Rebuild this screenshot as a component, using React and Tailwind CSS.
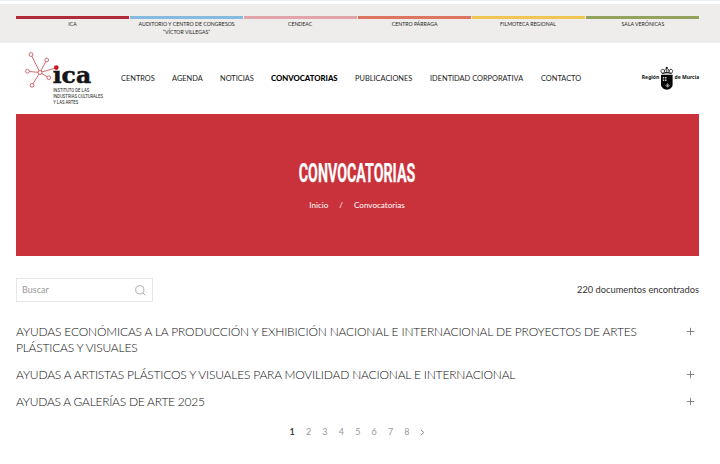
const CENTRES = [
  { lines: ['ICA'], bar: 'bg-[#b02c38]' },
  { lines: ['AUDITORIO Y CENTRO DE CONGRESOS', '“VÍCTOR VILLEGAS”'], bar: 'bg-[#86bade]' },
  { lines: ['CENDEAC'], bar: 'bg-[#e2a4ab]' },
  { lines: ['CENTRO PÁRRAGA'], bar: 'bg-[#dc7562]' },
  { lines: ['FILMOTECA REGIONAL'], bar: 'bg-[#f0c653]' },
  { lines: ['SALA VERÓNICAS'], bar: 'bg-[#93a35e]' },
];

const NAV = [
  { label: 'CENTROS', w: 'w-[34px]' },
  { label: 'AGENDA', w: 'w-[31px]' },
  { label: 'NOTICIAS', w: 'w-[34px]' },
  { label: 'CONVOCATORIAS', w: 'w-[67px]', active: true },
  { label: 'PUBLICACIONES', w: 'w-[57.5px]' },
  { label: 'IDENTIDAD CORPORATIVA', w: 'w-[93.5px]' },
  { label: 'CONTACTO', w: 'w-[40px]' },
];

const NODES = [[31, 54.5], [46.7, 60], [27.5, 71.3], [32, 85.3], [48.8, 77.7]];

function IcaLogo() {
  return (
    <svg className="h-[60px] w-[90px] shrink-0 overflow-visible" viewBox="20 48 90 60" role="img" aria-label="ICA">
      <g fill="#fff" stroke="#c9474f" strokeWidth="0.8">
        {NODES.map(([x, y]) => (
          <line key={x} x1="40" y1="72.5" x2={x} y2={y} />
        ))}
        <line x1="40" y1="72.5" x2="56" y2="68" />
        {NODES.map(([x, y]) => (
          <circle key={x} cx={x} cy={y} r="1.9" />
        ))}
        <circle cx="40" cy="72.5" r="2" />
      </g>
      <text x="52.7" y="83.2" fontFamily="'DejaVu Serif', serif" fontWeight="bold" fontSize="21.5" fill="#161616" stroke="#161616" strokeWidth="0.5" textLength="38.4" lengthAdjust="spacingAndGlyphs">ıca</text>
      <circle cx="56.3" cy="67.6" r="2.3" fill="#c4141d" />
      <g fontFamily="Roboto, sans-serif" fontSize="5.8" fill="#222">
        <text x="53.2" y="92" textLength="36" lengthAdjust="spacingAndGlyphs">INSTITUTO DE LAS</text>
        <text x="53.2" y="98" textLength="49.8" lengthAdjust="spacingAndGlyphs">INDUSTRIAS CULTURALES</text>
        <text x="53.2" y="104" textLength="25" lengthAdjust="spacingAndGlyphs">Y LAS ARTES</text>
      </g>
    </svg>
  );
}

function MurciaLogo() {
  return (
    <svg className="h-[30px] w-[60px] shrink-0 overflow-visible" viewBox="640 63 60 30" role="img" aria-label="Región de Murcia">
      <g fontFamily="'Noto Sans', sans-serif" fontWeight="bold" fontSize="5.4" fill="#111">
        <text x="641.8" y="79" textLength="17.5" lengthAdjust="spacingAndGlyphs">Región</text>
        <text x="674.5" y="79" textLength="24.7" lengthAdjust="spacingAndGlyphs">de Murcia</text>
      </g>
      <path d="M661 74.8h11.6v9.4c0 3.2-2.6 5.2-5.8 5.6-3.2-.4-5.8-2.4-5.8-5.6z" fill="#050505" />
      <g fill="none" stroke="#111" strokeWidth="0.8">
        <path d="M662.3 73.6c-2-2.2-1.6-4 .3-4.3 1.6-.1 2 1.4 1.8 2.6M671.3 73.6c2-2.2 1.6-4-.3-4.3-1.6-.1-2 1.4-1.8 2.6M664.6 71.6c0-2.2 1-3.2 2.2-3.2s2.2 1 2.2 3.2M666.8 66.7v5.4M665.8 67.5h2" />
        <path d="M662.2 73.4c2.8-.9 6.4-.9 9.2 0" strokeWidth="1.2" />
      </g>
      <path d="M662.8 77h1.5v1.6h-1.5zM665 77h1.5v1.6H665zM662.8 79.4h1.5V81h-1.5zM665 79.4h1.5V81H665z" fill="#ccc" />
      <path d="M667.6 83v4.6M665.4 85c.4 1.6 4 1.6 4.4 0M666.3 84.2l2.6 2.6M668.9 84.2l-2.6 2.6" fill="none" stroke="#ccc" strokeWidth="0.6" />
    </svg>
  );
}

function Plus() {
  return (
    <svg className="mt-[3px] mr-[4px] h-[9px] w-[9px] shrink-0" viewBox="0 0 9 9" stroke="#777" strokeWidth="0.9">
      <path d="M.8 4.5h7.4M4.5.8v7.4" />
    </svg>
  );
}

export default function App() {
  return (
    <div className="flex h-[464px] w-[720px] flex-col overflow-hidden bg-white font-[Lato,sans-serif] text-[#333]">
      <div className="h-[4px] border-t border-[#eef0f6] bg-white" />
      <header className="grid h-[39px] grid-cols-6 gap-px bg-[#eeedeb] pt-[12px] pr-[21px] pl-[16px]">
        {CENTRES.map((c) => (
          <div key={c.lines[0]} className="flex flex-col items-center">
            <div className={`h-[3px] w-full shrink-0 ${c.bar}`} />
            <div className="scale-x-[0.93] pt-px text-center text-[5.6px] leading-[8px] whitespace-nowrap text-[#222]">
              {c.lines.map((l) => (
                <div key={l}>{l}</div>
              ))}
            </div>
          </div>
        ))}
      </header>

      <div className="flex h-[71px] items-start pt-[5px] pl-[20px]">
        <IcaLogo />
        <nav className="ml-[11px] flex gap-[17.1px] pt-[24px] text-[8.2px] leading-[13px] whitespace-nowrap text-[#222]">
          {NAV.map((n) => (
            <a key={n.label} className={n.w}>
              <span className={`inline-block origin-left ${n.active ? 'scale-x-[0.945] font-black text-black' : 'scale-x-[0.905]'}`}>{n.label}</span>
            </a>
          ))}
        </nav>
        <div className="mr-[20px] ml-auto pt-[15px]">
          <MurciaLogo />
        </div>
      </div>

      <section className="mr-[21px] ml-[16px] flex h-[142px] flex-col items-center bg-[#ca323b] text-white">
        <h1 className="mt-[43px] mr-[2px] h-[34px] w-[220px] scale-x-[0.57] text-center font-[Roboto,sans-serif] text-[25px] leading-[34px] font-bold [-webkit-text-stroke:0.25px_white]">
          <span className="flex justify-center">CONVOCATORIAS</span>
        </h1>
        <div className="mt-[7px] mr-px flex gap-[11px] text-[8.1px] leading-[14px]">
          <span>Inicio</span>
          <span>/</span>
          <span>Convocatorias</span>
        </div>
      </section>

      <div className="mt-[22px] mr-[21px] ml-[16px] flex h-[24px] items-center justify-between">
        <div className="flex h-[24px] w-[137px] items-center justify-between border border-[#e6e6e6] pr-[6px] pl-[5px]">
          <span className="text-[9px] text-[#999]">Buscar</span>
          <svg className="h-[11px] w-[11px]" viewBox="0 0 11 11" fill="none" stroke="#999" strokeWidth="0.8">
            <circle cx="4.8" cy="4.8" r="4.1" />
            <path d="m7.8 7.8 2.6 2.6" />
          </svg>
        </div>
        <span className="text-[9.3px]">220 documentos encontrados</span>
      </div>

      <main className="mt-[22px] mr-[21px] ml-[16px] flex flex-col gap-[11px] text-[12px] leading-[16px] font-light whitespace-nowrap text-[#111]">
        <div className="flex items-start justify-between">
          <div>
            <p className="tracking-[-0.165px]">AYUDAS ECONÓMICAS A LA PRODUCCIÓN Y EXHIBICIÓN NACIONAL E INTERNACIONAL DE PROYECTOS DE ARTES</p>
            <p className="tracking-[-0.2px]">PLÁSTICAS Y VISUALES</p>
          </div>
          <Plus />
        </div>
        <div className="flex items-start justify-between">
          <p className="tracking-[-0.185px]">AYUDAS A ARTISTAS PLÁSTICOS Y VISUALES PARA MOVILIDAD NACIONAL E INTERNACIONAL</p>
          <Plus />
        </div>
        <div className="flex items-start justify-between">
          <p className="tracking-[-0.25px]">AYUDAS A GALERÍAS DE ARTE 2025</p>
          <Plus />
        </div>
      </main>

      <div className="mt-[14px] flex items-center pl-[284px] text-[9px] leading-[16px] text-[#999]">
        <span className="w-[16.4px] text-center font-bold text-[#444]">1</span>
        {[2, 3, 4, 5, 6, 7, 8].map((n) => (
          <span key={n} className="w-[16.4px] text-center">{n}</span>
        ))}
        <svg className="ml-[5px] h-[7px] w-[5px]" viewBox="0 0 5 7" fill="none" stroke="#888" strokeWidth="1">
          <path d="m1 1 2.8 2.5L1 6" />
        </svg>
      </div>
    </div>
  );
}
